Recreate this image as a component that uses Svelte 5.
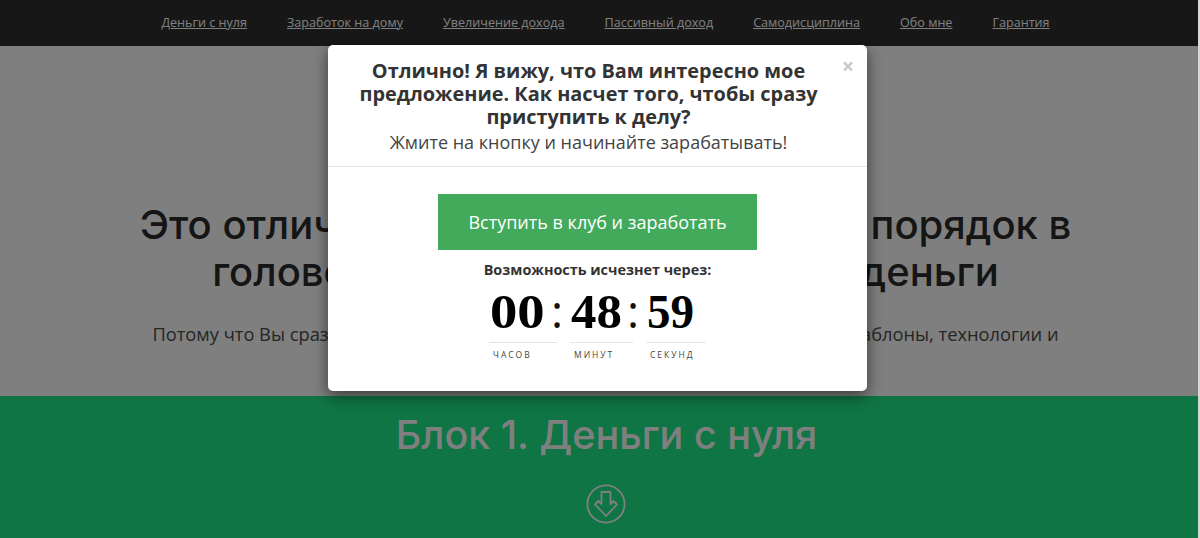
<script>
	const links = ['Деньги с нуля', 'Заработок на дому', 'Увеличение дохода', 'Пассивный доход', 'Самодисциплина', 'Обо мне', 'Гарантия'];
	const timer = [
		{ value: '00', label: 'часов', width: 68, scale: 1.14 },
		{ value: '48', label: 'минут', width: 63, scale: 1.06 },
		{ value: '59', label: 'секунд', width: 60, scale: 0.98 }
	];
</script>

<div class="page">
	<nav>
		{#each links as link}
			<a href="#top">{link}</a>
		{/each}
	</nav>

	<section class="hero">
		<h1>Это отличный способ легко навести порядок в<br />голове, и начнете зарабатывать деньги</h1>
		<p>Потому что Вы сразу получаете в свое распоряжение и готовые инструкции, шаблоны, технологии и</p>
	</section>

	<section class="block">
		<h2>Блок 1. Деньги с нуля</h2>
		<svg class="down" viewBox="0 0 40 40" width="40" height="40" fill="none" stroke="currentColor" stroke-width="1.8" stroke-linejoin="round">
			<circle cx="20" cy="20" r="18.6" />
			<path d="M15.5 8h9v12l3-3 3.5 3.5L20 32 9 20.5 12.5 17l3 3z" />
		</svg>
	</section>

	<div class="backdrop"></div>

	<div class="modal">
		<header>
			<button class="close" aria-label="Закрыть">×</button>
			<h3>Отлично! Я вижу, что Вам интересно мое предложение. Как насчет того, чтобы сразу приступить к делу?</h3>
			<p>Жмите на кнопку и начинайте зарабатывать!</p>
		</header>
		<div class="body">
			<button class="cta">Вступить в клуб и заработать</button>
			<div class="note">Возможность исчезнет через:</div>
			<div class="timer">
				{#each timer as t, i}
					<div class="unit" style="width: {t.width}px">
						<div class="value">
							<span style="transform: scaleX({t.scale})">{t.value}</span>
							{#if i < timer.length - 1}<i>:</i>{/if}
						</div>
						<div class="label">{t.label}</div>
					</div>
				{/each}
			</div>
		</div>
	</div>
</div>

<style>
	:global(body) {
		margin: 0;
		background: #d8d8d8;
		overflow: hidden;
	}
	.page {
		position: relative;
		width: 1198px;
		height: 538px;
		overflow: hidden;
		font-family: 'Open Sans', sans-serif;
		color: #222;
	}
	nav {
		height: 46px;
		box-sizing: border-box;
		background: #2e2e2e;
		display: flex;
		justify-content: center;
		align-items: center;
		gap: 40px;
		padding: 0 0 2px 13px;
	}
	nav a {
		color: #fff;
		font-size: 12.6px;
		text-decoration: underline;
	}
	.hero {
		height: 350px;
		box-sizing: border-box;
		background: #fff;
		padding: 155px 0 0 13px;
		text-align: center;
	}
	.hero h1 {
		margin: 0;
		font-family: Inter, sans-serif;
		font-weight: 500;
		font-size: 40px;
		line-height: 47px;
		color: #2a2a2a;
		white-space: nowrap;
	}
	.hero p {
		margin: 26px 0 0;
		font-size: 18.3px;
		line-height: 26px;
		color: #4a4a4a;
		white-space: nowrap;
	}
	.block {
		height: 142px;
		background: #1eea8a;
		padding: 14px 0 0 15px;
		box-sizing: border-box;
		text-align: center;
		color: #fff;
	}
	.block h2 {
		margin: 0;
		font-family: Inter, sans-serif;
		font-weight: 500;
		font-size: 39.5px;
		line-height: 50px;
	}
	.down {
		display: block;
		margin: 24px auto 0;
		transform: translateX(-1px);
	}
	.backdrop {
		position: absolute;
		inset: 0;
		background: rgba(0, 0, 0, 0.5);
	}
	.modal {
		position: absolute;
		left: 328px;
		top: 45px;
		width: 539px;
		height: 346px;
		background: #fff;
		border-radius: 5px;
		box-shadow: 0 5px 15px rgba(0, 0, 0, 0.55);
	}
	header {
		position: relative;
		height: 122px;
		box-sizing: border-box;
		padding: 14px 48px 0 30px;
		border-bottom: 1px solid #e5e5e5;
		text-align: center;
	}
	.close {
		position: absolute;
		top: 9px;
		right: 13px;
		border: 0;
		padding: 0;
		background: none;
		font-family: 'Open Sans', sans-serif;
		font-weight: 700;
		font-size: 21px;
		line-height: 24px;
		color: #c8c8c8;
	}
	h3 {
		margin: 0;
		font-size: 19.9px;
		line-height: 23px;
		font-weight: 700;
		color: #333;
	}
	header p {
		margin: 0;
		font-size: 18px;
		line-height: 28px;
		font-weight: 400;
		color: #444;
	}
	.body {
		display: flex;
		flex-direction: column;
		align-items: center;
		padding-top: 27px;
	}
	.cta {
		width: 319px;
		height: 56px;
		border: 0;
		background: #43aa5c;
		color: #fff;
		font-family: 'Open Sans', sans-serif;
		font-size: 18px;
	}
	.note {
		margin-top: 10px;
		font-size: 14.4px;
		line-height: 20px;
		font-weight: 700;
		color: #333;
	}
	.timer {
		display: flex;
		gap: 13px;
		margin-top: 8px;
	}
	.value {
		position: relative;
		height: 48px;
		padding-bottom: 6px;
		border-bottom: 1px solid #e5e5e5;
		font-family: 'Liberation Serif', serif;
		font-weight: 700;
		font-size: 48px;
		line-height: 48px;
		color: #000;
	}
	.value span {
		display: block;
		margin-left: 1px;
		transform-origin: left;
	}
	.value i {
		position: absolute;
		right: -8px;
		top: -2px;
		width: 16px;
		text-align: center;
		font-family: 'Open Sans', sans-serif;
		font-style: normal;
		font-weight: 400;
		font-size: 46px;
		line-height: 48px;
		color: #111;
	}
	.label {
		margin-top: 6px;
		padding-left: 4px;
		font-size: 8.5px;
		line-height: 12px;
		letter-spacing: 2px;
		text-transform: uppercase;
		color: #444;
	}
</style>
